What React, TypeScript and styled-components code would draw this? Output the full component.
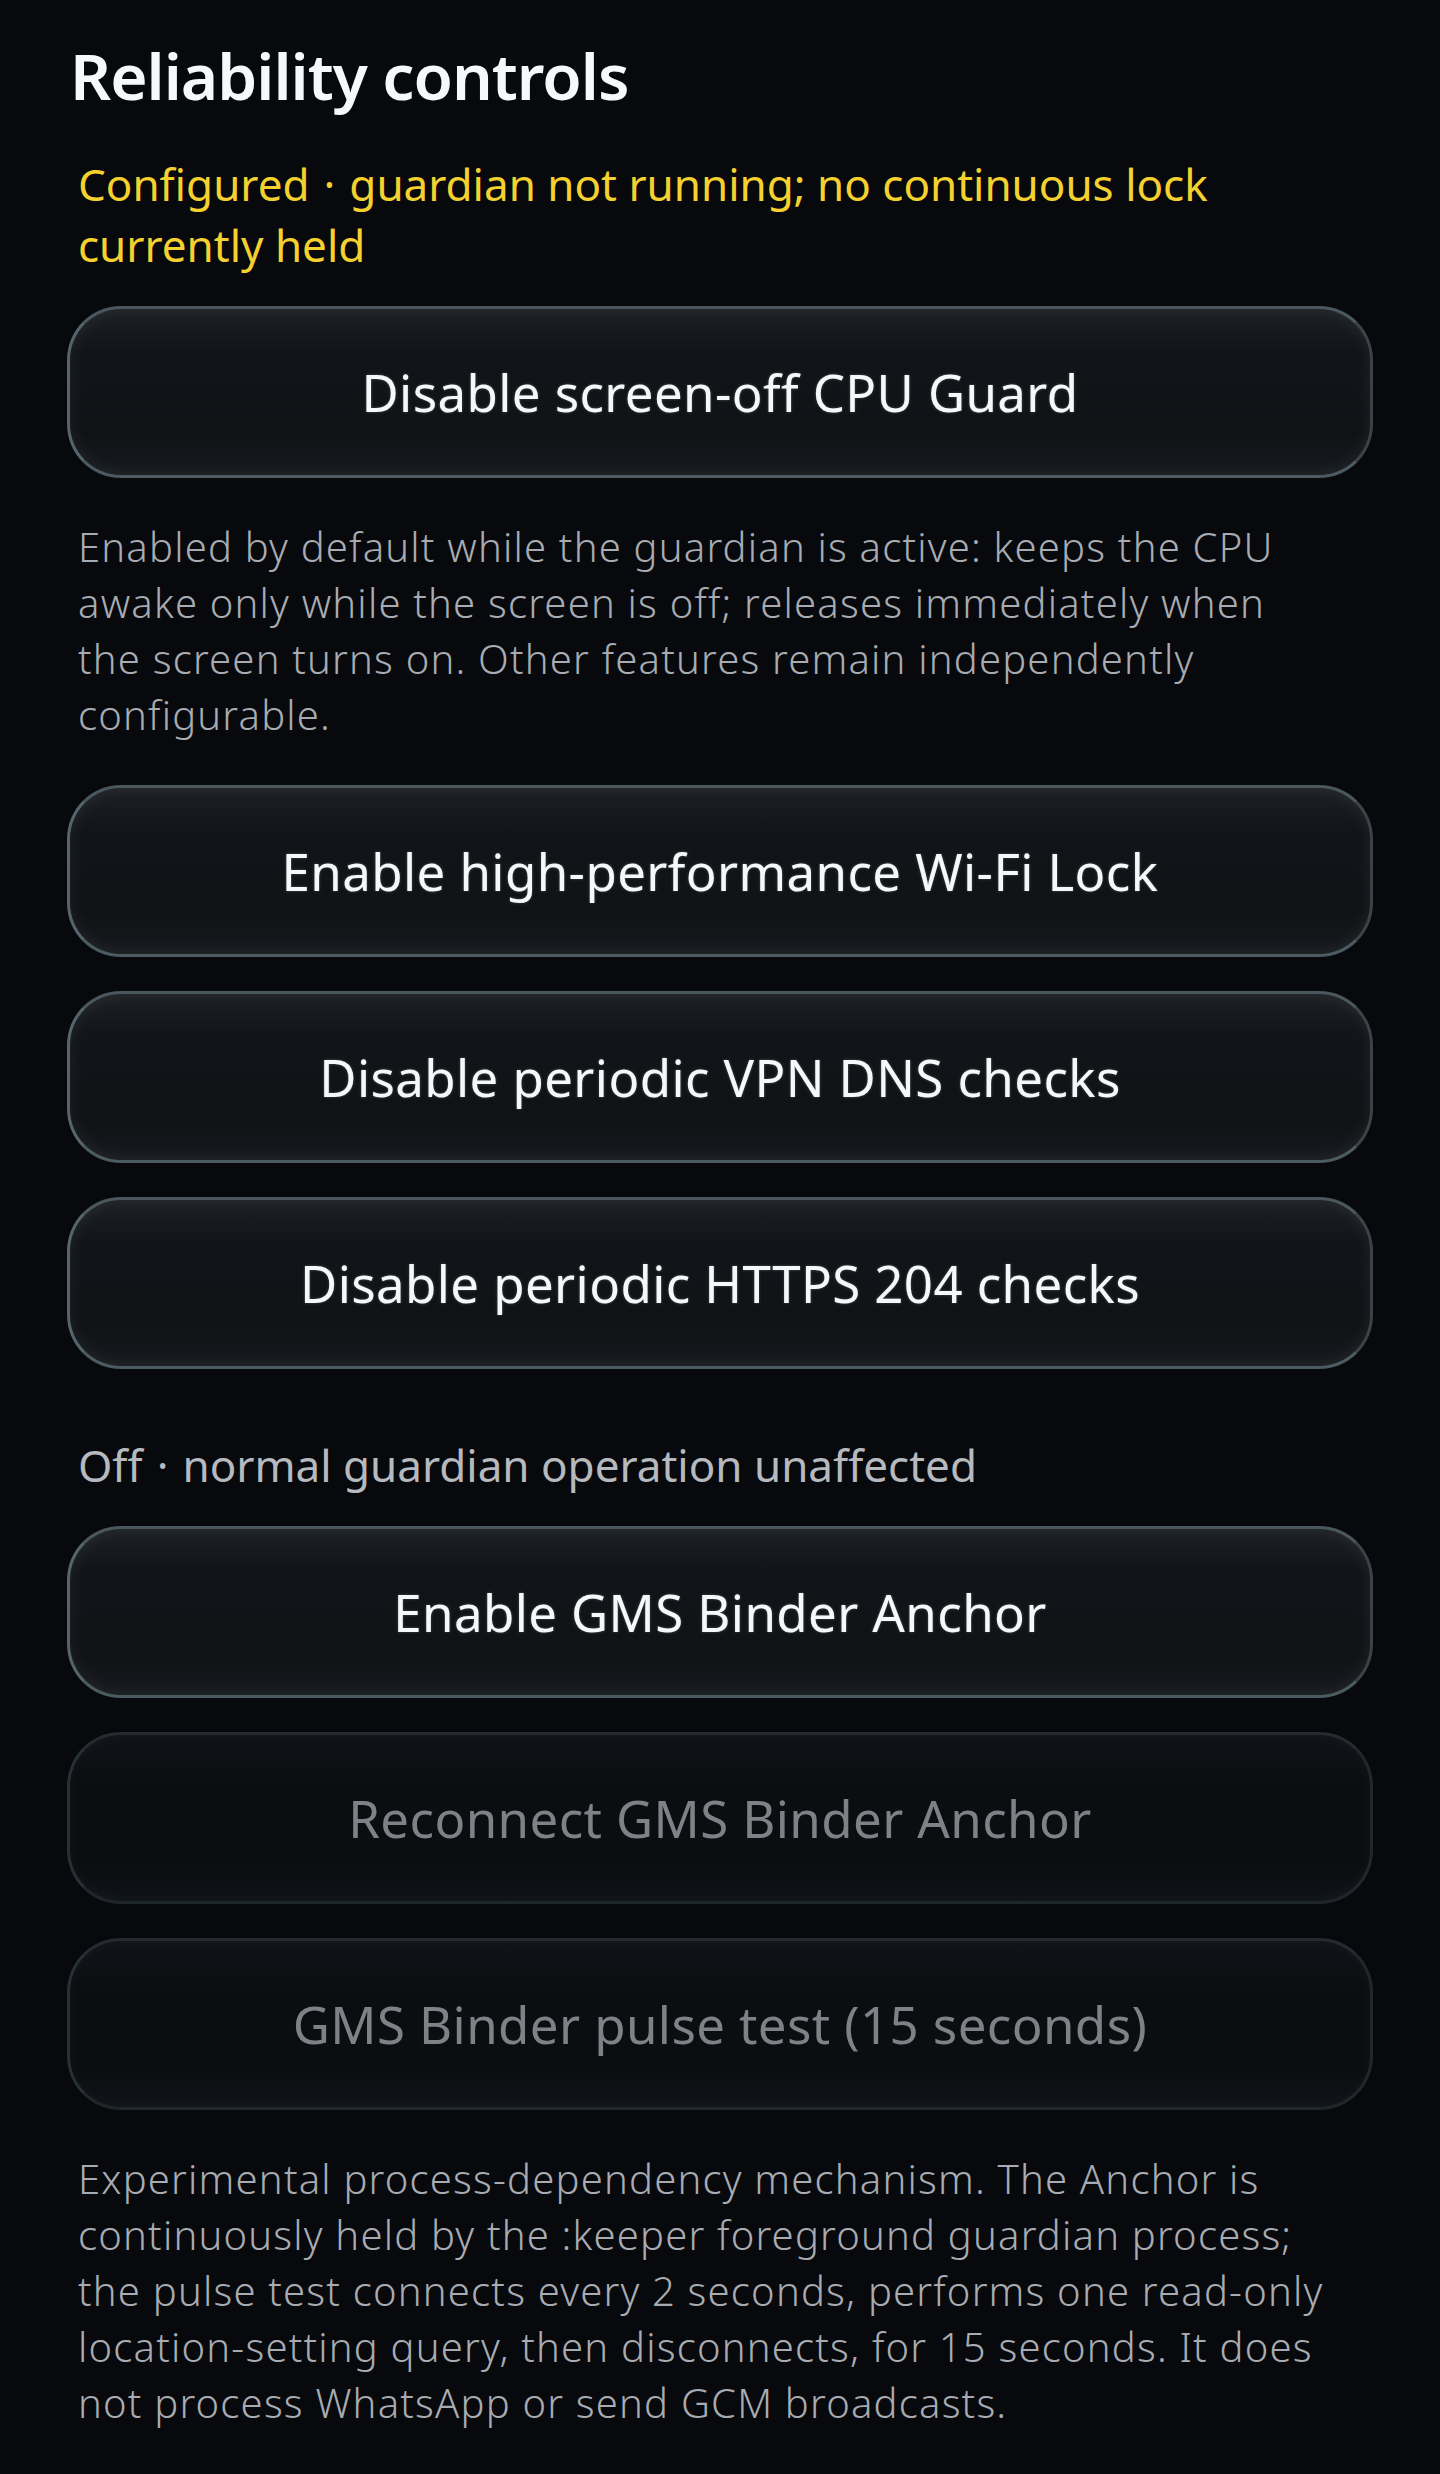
import React, { FC } from "react";
import styled, { createGlobalStyle } from "styled-components";

const GlobalStyle = createGlobalStyle`
  html, body {
    margin: 0;
    padding: 0;
    background: #07090c;
  }
  body {
    font-family: "Noto Sans", "Open Sans", sans-serif;
    -webkit-font-smoothing: antialiased;
  }
`;

const PageStyle = styled.div`
  min-height: 2474px;
  box-sizing: border-box;
  padding: 36px 67px 0;
  display: flex;
  flex-direction: column;
  background: #07090c;
`;

const TitleStyle = styled.h1`
  margin: 0 0 38px 3px;
  font-size: 64px;
  line-height: 80px;
  font-weight: 600;
  color: #f7f8fa;
  letter-spacing: -1px;
`;

const StatusStyle = styled.div<{ $tone: "warn" | "muted" }>`
  margin: ${p => (p.$tone === "warn" ? "0" : "66px")} 11px 30px;
  font-size: 44px;
  line-height: 61px;
  font-weight: 400;
  color: ${p => (p.$tone === "warn" ? "#f4d12f" : "#b6b9be")};
  letter-spacing: 0;
  white-space: nowrap;
`;

const DotStyle = styled.span`
  padding: 0 14px;
`;

const NoteStyle = styled.p`
  margin: 41px 11px 42px;
  font-size: 40px;
  line-height: 56px;
  font-weight: 300;
  color: #a8acb2;
  letter-spacing: 1.2px;
  white-space: nowrap;
`;

const StackStyle = styled.div`
  display: flex;
  flex-direction: column;
  gap: 34px;
`;

const ButtonStyle = styled.button<{ $disabled?: boolean }>`
  height: 172px;
  width: 100%;
  box-sizing: border-box;
  border-radius: 54px;
  border: 3px solid;
  border-color: ${p =>
    p.$disabled
      ? "#252b30 #22272b #20272b #273034"
      : "#4a575f #3d4247 #4c5a62 #56646c"};
  background: ${p =>
    p.$disabled
      ? "linear-gradient(180deg, #101317 0%, #0b0d11 30%, #0b0d11 80%, #101317 100%)"
      : "linear-gradient(180deg, #1c1f23 0%, #111418 26%, #101216 75%, #16191d 100%)"};
  box-shadow: ${p =>
    p.$disabled
      ? "inset 0 0 14px rgba(255, 255, 255, 0.035)"
      : "inset 0 0 18px rgba(255, 255, 255, 0.07)"};
  display: flex;
  align-items: center;
  justify-content: center;
  padding: 0 40px;
  font-family: "Noto Sans", "Open Sans", sans-serif;
  font-size: 51px;
  font-weight: 400;
  letter-spacing: 0.4px;
  color: ${p => (p.$disabled ? "#7e8186" : "#f6f7f9")};
  text-shadow: ${p =>
    p.$disabled ? "none" : "0 0 3px rgba(255, 255, 255, 0.25)"};
  cursor: ${p => (p.$disabled ? "default" : "pointer")};
`;

interface ActionModel {
  label: string;
  disabled?: boolean;
}

const ActionStack: FC<{ actions: ActionModel[] }> = ({ actions }) => (
  <StackStyle>
    {actions.map(action => (
      <ButtonStyle key={action.label} $disabled={action.disabled} disabled={action.disabled}>
        {action.label}
      </ButtonStyle>
    ))}
  </StackStyle>
);

// lines broken as on the device screen
const Lines: FC<{ lines: string[] }> = ({ lines }) => (
  <>
    {lines.map((line, i) => (
      <React.Fragment key={i}>
        {i > 0 && <br />}
        {line}
      </React.Fragment>
    ))}
  </>
);

const networkActions: ActionModel[] = [
  { label: "Enable high-performance Wi-Fi Lock" },
  { label: "Disable periodic VPN DNS checks" },
  { label: "Disable periodic HTTPS 204 checks" },
];

const anchorActions: ActionModel[] = [
  { label: "Enable GMS Binder Anchor" },
  { label: "Reconnect GMS Binder Anchor", disabled: true },
  { label: "GMS Binder pulse test (15 seconds)", disabled: true },
];

const guardNote = [
  "Enabled by default while the guardian is active: keeps the CPU",
  "awake only while the screen is off; releases immediately when",
  "the screen turns on. Other features remain independently",
  "configurable.",
];

const anchorNote = [
  "Experimental process-dependency mechanism. The Anchor is",
  "continuously held by the :keeper foreground guardian process;",
  "the pulse test connects every 2 seconds, performs one read-only",
  "location-setting query, then disconnects, for 15 seconds. It does",
  "not process WhatsApp or send GCM broadcasts.",
];

export default function App() {
  return (
    <>
      <GlobalStyle />
      <PageStyle>
        <TitleStyle>Reliability controls</TitleStyle>
        <StatusStyle $tone="warn">
          Configured<DotStyle>·</DotStyle>guardian not running; no continuous lock
          <br />
          currently held
        </StatusStyle>
        <ActionStack actions={[{ label: "Disable screen-off CPU Guard" }]} />
        <NoteStyle>
          <Lines lines={guardNote} />
        </NoteStyle>
        <ActionStack actions={networkActions} />
        <StatusStyle $tone="muted">
          Off<DotStyle>·</DotStyle>normal guardian operation unaffected
        </StatusStyle>
        <ActionStack actions={anchorActions} />
        <NoteStyle>
          <Lines lines={anchorNote} />
        </NoteStyle>
      </PageStyle>
    </>
  );
}
